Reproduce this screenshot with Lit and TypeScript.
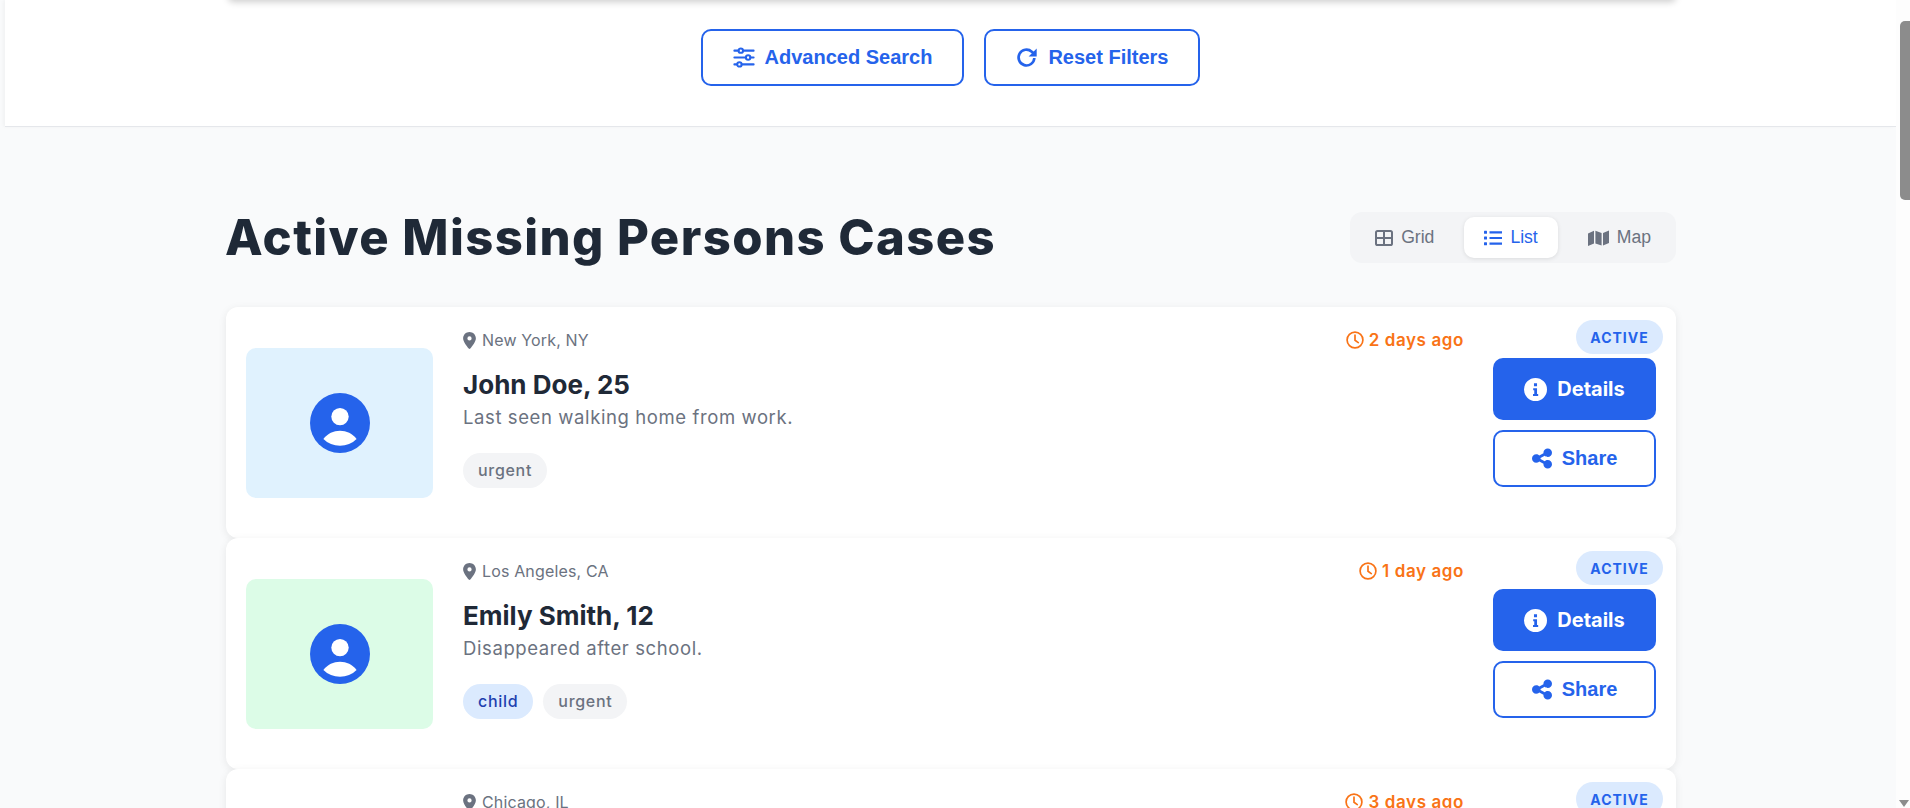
import { LitElement, html, css, svg } from "lit";
import { customElement } from "lit/decorators.js";

const ic = (vb: string, cls: string, body: unknown) =>
  html`<svg class=${cls} viewBox=${vb} aria-hidden="true">${body}</svg>`;

const sliders = () => ic("0 0 24 24", "i-slide", svg`
  <g fill="none" stroke="currentColor" stroke-width="2.2" stroke-linecap="round">
    <path d="M1.5 4.5H6M11 4.5H22.5M1.5 12H14M19 12H22.5M1.5 19.5H4.5M9.5 19.5H22.5"/>
    <circle cx="8.5" cy="4.5" r="2.4"/><circle cx="16.5" cy="12" r="2.4"/><circle cx="7" cy="19.5" r="2.4"/>
  </g>`);
const redo = () => ic("0 0 24 24", "i-redo", svg`
  <path d="M20 12.5A8.6 8.6 0 1 1 17.2 5.7L20 8.2" fill="none" stroke="currentColor" stroke-width="2.9" stroke-linecap="butt"/>
  <path d="M22.6 2.2V11h-8.8z" fill="currentColor"/>`);
const grid = () => ic("0 0 18 18", "i-view", svg`
  <rect x="1" y="2" width="16" height="14" rx="1.6" fill="none" stroke="currentColor" stroke-width="2"/>
  <path d="M9 2v14M1 9h16" stroke="currentColor" stroke-width="2"/>`);
const list = () => ic("0 0 18 18", "i-view", svg`
  <path d="M5.5 3.3H18M5.5 9H18M5.5 14.7H18" stroke="currentColor" stroke-width="2.2"/>
  <rect x="0" y="1.8" width="3" height="3" rx=".5" fill="currentColor"/>
  <rect x="0" y="7.5" width="3" height="3" rx=".5" fill="currentColor"/>
  <rect x="0" y="13.2" width="3" height="3" rx=".5" fill="currentColor"/>`);
const map = () => ic("0 0 21 18", "i-map", svg`
  <path fill="currentColor" d="M0 4.6 6 1.8V14.6L0 17zM7.4 1.8 13.6 4V16.6L7.4 14.4zM15 4 21 1.4V14L15 16.6z"/>`);
const pin = () => ic("0 0 384 512", "i-pin", svg`
  <path fill="currentColor" d="M215.7 499.2C267 435 384 279.4 384 192C384 86 298 0 192 0S0 86 0 192c0 87.4 117 243 168.3 307.2c12.3 15.3 35.1 15.3 47.4 0zM192 128a64 64 0 1 1 0 128 64 64 0 1 1 0-128z"/>`);
const clock = () => ic("0 0 18 18", "i-clock", svg`
  <circle cx="9" cy="9" r="7.9" fill="none" stroke="currentColor" stroke-width="1.7"/>
  <path d="M9 4.2V9.3L12.3 11.6" fill="none" stroke="currentColor" stroke-width="1.7" stroke-linecap="round"/>`);
const info = () => ic("0 0 24 24", "i-btn", svg`
  <path fill="currentColor" fill-rule="evenodd" d="M12 0a12 12 0 1 0 0 24 12 12 0 0 0 0-24zM10.4 5.6h3.2v3h-3.2zM9.6 10.6h4v6.1h1.2v2.2H9.4v-2.2h1.3v-3.9H9.6z"/>`);
const share = () => ic("0 0 448 512", "i-share", svg`
  <path fill="currentColor" d="M352 224c53 0 96-43 96-96s-43-96-96-96s-96 43-96 96c0 4 .2 8 .7 11.9l-94.1 47C145.4 170.2 121.9 160 96 160c-53 0-96 43-96 96s43 96 96 96c25.9 0 49.4-10.2 66.6-26.9l94.1 47c-.5 3.9-.7 7.8-.7 11.9c0 53 43 96 96 96s96-43 96-96s-43-96-96-96c-25.9 0-49.4 10.2-66.6 26.9l-94.1-47c.5-3.9 .7-7.8 .7-11.9s-.2-8-.7-11.9l94.1-47C302.6 213.8 326.1 224 352 224z"/>`);
const user = () => ic("0 0 60 60", "i-user", svg`
  <circle cx="30" cy="30" r="30" fill="#2563eb"/>
  <circle cx="30" cy="23.6" r="8.7" fill="#fff"/>
  <path d="M13.4 46C17.5 40.5 23.5 37.7 30 37.7S42.5 40.5 46.6 46C42 50.5 36.5 52.7 30 52.7S18 50.5 13.4 46z" fill="#fff"/>`);

interface Case { place: string; name: string; desc: string; ago: string; thumb: string; tags: string[]; }
const CASES: Case[] = [
  { place: "New York, NY", name: "John Doe, 25", desc: "Last seen walking home from work.", ago: "2 days ago", thumb: "#e0f2fe", tags: ["urgent"] },
  { place: "Los Angeles, CA", name: "Emily Smith, 12", desc: "Disappeared after school.", ago: "1 day ago", thumb: "#dcfce7", tags: ["child", "urgent"] },
  { place: "Chicago, IL", name: "Michael Brown, 40", desc: "Last seen at the train station.", ago: "3 days ago", thumb: "#fef3c7", tags: ["urgent"] },
];

@customElement("app-root")
export class AppRoot extends LitElement {
  static styles = css`
    :host { display: flex; width: 1910px; height: 808px; overflow: hidden; background: #f9fafb; font-family: "Inter", "Liberation Sans", sans-serif; }
    .page { flex: 1; min-width: 0; padding-left: 5px; height: 808px; overflow: hidden; }
    .strip { height: 10px; margin: -10px 220px 0 223px; border-radius: 10px; box-shadow: 0 2px 7px rgba(0,0,0,.2); background: #fff; position: relative; z-index: 1; }
    .filters { height: 127px; box-sizing: border-box; background: #fff; border-bottom: 1px solid #e5e7eb; box-shadow: -2px 0 3px rgba(0,0,0,.03); display: flex; justify-content: center; align-items: flex-start; gap: 20px; padding-top: 29px; }
    .outline { display: flex; align-items: center; justify-content: center; gap: 10px; box-sizing: border-box; border: 2px solid #2563eb; border-radius: 10px; background: #fff; color: #2563eb; font: 700 20px "Liberation Sans", Arial, sans-serif; }
    .filters .outline { height: 57px; padding: 0 30px; }
    .i-slide { width: 22px; height: 23px; }
    .i-redo { width: 22px; height: 23px; }
    .content { padding: 85px 220px 0 221px; }
    .head { display: flex; justify-content: space-between; align-items: center; margin-bottom: 44px; height: 51px; }
    h2 { margin: 0 0 0 -1px; font: 800 49px/1 "Inter", sans-serif; letter-spacing: 1.42px; color: #1f2937; }
    .views { display: flex; gap: 10px; align-items: center; height: 51px; box-sizing: border-box; padding: 5px; background: #f3f4f6; border-radius: 12px; }
    .view { display: flex; align-items: center; justify-content: center; gap: 8px; height: 41px; padding: 0 20px; border-radius: 10px; color: #6b7280; font: 400 17.6px "Liberation Sans", Arial, sans-serif; }
    .view.on { background: #fff; color: #2563eb; box-shadow: 0 1px 4px rgba(0,0,0,.1); }
    .i-view { width: 18px; height: 18px; }
    .i-map { width: 21px; height: 18px; }
    .cards { display: flex; flex-direction: column; }
    .card { position: relative; display: flex; gap: 30px; height: 231px; box-sizing: border-box; padding: 20px; background: #fff; border-radius: 12px; box-shadow: 0 2px 8px rgba(0,0,0,.08); align-items: center; flex: none; }
    .thumb { width: 187px; height: 150px; flex: none; border-radius: 10px; display: flex; align-items: center; justify-content: center; }
    .i-user { width: 60px; height: 60px; }
    .body { flex: 1; min-width: 0; align-self: flex-start; }
    .top { display: flex; justify-content: space-between; align-items: center; height: 26px; }
    .place { display: flex; align-items: center; gap: 6px; color: #6b7280; font-size: 16px; letter-spacing: .15px; }
    .i-pin { width: 13px; height: 17px; }
    .ago { display: flex; align-items: center; gap: 5px; margin-right: -1px; color: #f97316; font-weight: 600; font-size: 17px; letter-spacing: .6px; }
    .i-clock { width: 18px; height: 18px; }
    h3 { margin: 17px 0 0; font: 700 26px/30px "Inter", sans-serif; color: #1f2937; }
    .desc { margin: 3.5px 0 0; color: #6b7280; font-size: 18.5px; letter-spacing: .6px; line-height: 26px; }
    .tags { display: flex; gap: 10px; margin-top: 23px; }
    .tag { height: 35px; display: flex; align-items: center; padding: 0 15px; border-radius: 18px; background: #f3f4f6; color: #6b7280; font-size: 16px; letter-spacing: .7px; font-weight: 500; }
    .tag.child { background: #dbeafe; color: #1e40af; }
    .actions { width: 163px; flex: none; display: flex; flex-direction: column; gap: 10px; }
    .primary { display: flex; align-items: center; justify-content: center; gap: 10px; height: 62px; border-radius: 10px; background: #2563eb; color: #fff; font-weight: 700; font-size: 20px; }
    .i-btn { width: 23px; height: 23px; }
    .actions .outline { height: 57px; }
    .i-share { width: 20px; height: 23px; }
    .badge { position: absolute; top: 13px; right: 13px; height: 34px; width: 87px; box-sizing: border-box; display: flex; align-items: center; justify-content: center; border-radius: 17px; background: #dbeafe; color: #2563eb; font-weight: 700; font-size: 14px; letter-spacing: 1px; }
    .bar { width: 14px; flex: none; height: 808px; background: #fdfdfd; display: flex; flex-direction: column; align-items: flex-end; position: relative; }
    .thumbbar { width: 10px; height: 179px; margin-top: 21px; background: #8c8c8c; border-radius: 5px 0 0 5px; }
    .arrow { position: absolute; bottom: 1px; right: 1px; width: 0; height: 0; border-left: 5px solid transparent; border-right: 5px solid transparent; border-top: 7px solid #8c8c8c; }
  `;

  private card(c: Case) {
    return html`<article class="card">
      <div class="thumb" style="background:${c.thumb}">${user()}</div>
      <div class="body">
        <div class="top">
          <span class="place">${pin()}${c.place}</span>
          <span class="ago">${clock()}${c.ago}</span>
        </div>
        <h3>${c.name}</h3>
        <p class="desc">${c.desc}</p>
        <div class="tags">${c.tags.map((t) => html`<span class="tag ${t}">${t}</span>`)}</div>
      </div>
      <div class="actions">
        <div class="primary">${info()}Details</div>
        <div class="outline">${share()}Share</div>
      </div>
      <span class="badge">ACTIVE</span>
    </article>`;
  }

  render() {
    return html`
      <div class="page">
        <div class="strip"></div>
        <section class="filters">
          <div class="outline">${sliders()}Advanced Search</div>
          <div class="outline">${redo()}Reset Filters</div>
        </section>
        <main class="content">
          <div class="head">
            <h2>Active Missing Persons Cases</h2>
            <div class="views">
              <div class="view">${grid()}Grid</div>
              <div class="view on">${list()}List</div>
              <div class="view">${map()}Map</div>
            </div>
          </div>
          <div class="cards">${CASES.map((c) => this.card(c))}</div>
        </main>
      </div>
      <div class="bar"><div class="thumbbar"></div><div class="arrow"></div></div>
    `;
  }
}
